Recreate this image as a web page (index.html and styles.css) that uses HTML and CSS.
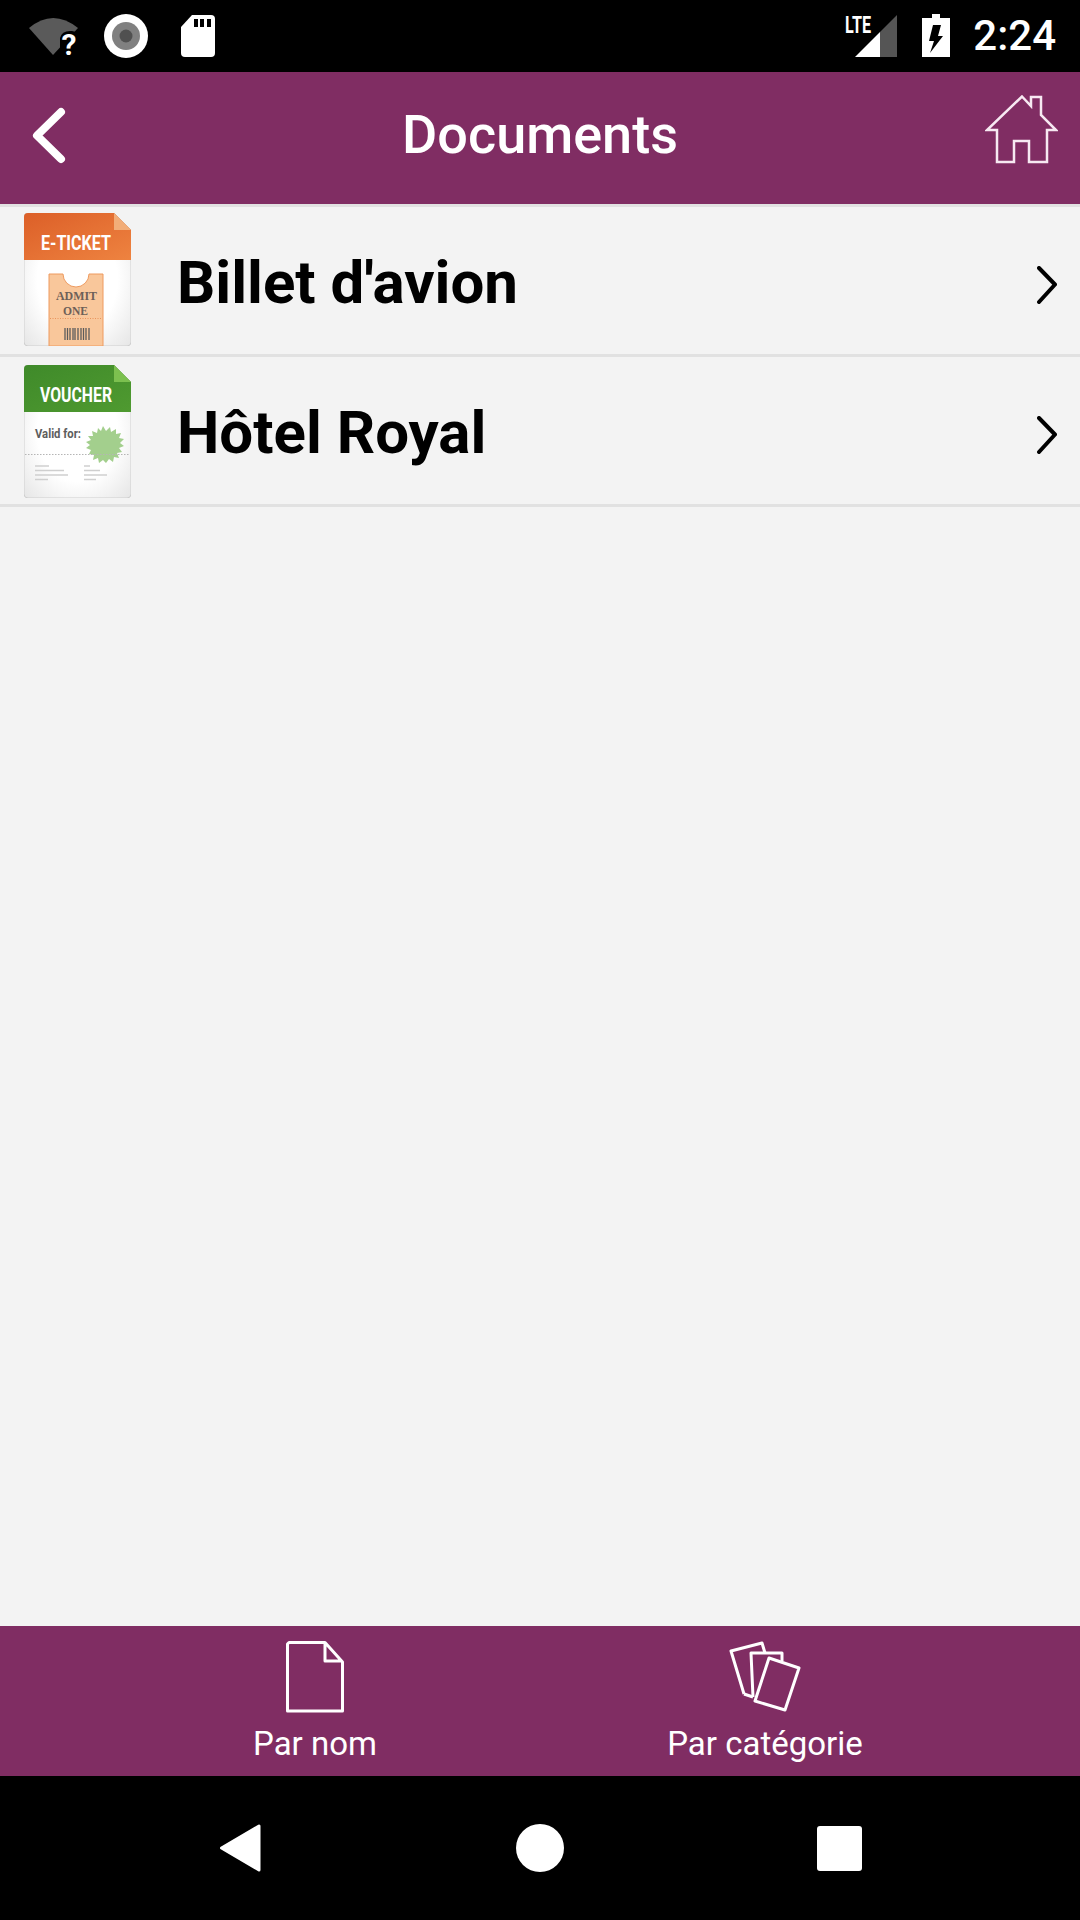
FILE: index.html
```html
<!DOCTYPE html>
<html lang="fr">
<head>
    <meta charset="UTF-8">
    <meta name="viewport" content="width=device-width, initial-scale=1.0">
    <title>Documents</title>
    <link rel="stylesheet" href="styles.css">
</head>
<body>

<!-- Android status bar -->
<div class="status-bar">
    <svg width="230" height="72" viewBox="0 0 230 72">
        <path d="M29 28 Q53 8 78 28 L53 55 Z" fill="#5a5a5a"/>
        <path d="M60 38 Q62 30 72 31 L80 33 V58 H60 Z" fill="#000"/>
        <text x="69" y="55" class="wifi-mark">?</text>
        <circle cx="126" cy="36" r="22" fill="#fff"/>
        <circle cx="126" cy="36" r="14" fill="#808080"/>
        <circle cx="126" cy="36" r="6.500" fill="#505050"/>
        <path d="M192 15 H211 Q215 15 215 19 V53 Q215 57 211 57 H185 Q181 57 181 53 V27 Z" fill="#fff"/>
        <rect x="194" y="19" width="4" height="8" fill="#000"/>
        <rect x="200" y="19" width="4" height="8" fill="#000"/>
        <rect x="207" y="19" width="4" height="8" fill="#000"/>
    </svg>
    <div class="status-right">
        <svg width="112" height="72" viewBox="0 0 112 72">
            <text x="0" y="33" class="lte-mark" textLength="26" lengthAdjust="spacingAndGlyphs">LTE</text>
            <path d="M10 57 L35 32 V57 Z" fill="#fff"/>
            <path d="M35 32 L52 15 V57 H35 Z" fill="#555"/>
            <path d="M87 14 H95 V18 H105 V57 H77 V18 H87 Z" fill="#fff"/>
            <path d="M88 25 H96 L93 36 H98 L85 53 L89 41 H84 Z" fill="#000"/>
        </svg>
        <span class="clock">2:24</span>
    </div>
</div>

<!-- Header -->
<header class="top-bar">
    <svg class="back-icon" width="34" height="57" viewBox="0 0 34 57">
        <path d="M29 5 L5 28.500 L29 52" fill="none" stroke="#fff" stroke-width="8" stroke-linecap="round" stroke-linejoin="round"/>
    </svg>
    <h1>Documents</h1>
    <svg class="home-icon" width="73" height="69" viewBox="0 0 73 69">
        <path d="M37 1.500 L46 11 V2 H56 V20 L71 35 H62 V67 H44 V46 H29 V67 H12 V35 H2 Z" fill="none" stroke="#f7e9f2" stroke-width="2.500"/>
    </svg>
</header>

<!-- Document list -->
<main class="doc-list">
    <a class="doc-row">
        <svg class="doc-thumb" width="107" height="133" viewBox="0 0 107 133">
            <defs>
                <radialGradient id="paper" cx="0.5" cy="0.5" r="0.75">
                    <stop offset="0.5" stop-color="#ffffff"/>
                    <stop offset="1" stop-color="#e2e2e2"/>
                </radialGradient>
                <linearGradient id="orange" x1="0" y1="0" x2="1" y2="1">
                    <stop offset="0" stop-color="#dc5f28"/>
                    <stop offset="1" stop-color="#ee8340"/>
                </linearGradient>
                <linearGradient id="green" x1="0" y1="0" x2="1" y2="1">
                    <stop offset="0" stop-color="#3f8a2a"/>
                    <stop offset="1" stop-color="#4f9a30"/>
                </linearGradient>
            </defs>
            <path d="M4 0 H90 L107 17 V129 Q107 133 103 133 H4 Q0 133 0 129 V4 Q0 0 4 0 Z" fill="url(#paper)" stroke="#cfcfcf"/>
            <path d="M4 0 H90 L107 17 V47 H0 V4 Q0 0 4 0 Z" fill="url(#orange)"/>
            <path d="M90 0 L107 17 H90 Z" fill="#f2ad78"/>
            <text x="17" y="37" class="thumb-title" textLength="70" lengthAdjust="spacingAndGlyphs">E-TICKET</text>
            <path d="M25 61 H39 A13 13 0 0 0 65 61 H79 V133 H25 Z" fill="#f9c79b" stroke="#ee9a5e"/>
            <text x="32" y="87" class="thumb-admit" textLength="41" lengthAdjust="spacingAndGlyphs">ADMIT</text>
            <text x="39" y="102" class="thumb-admit" textLength="25" lengthAdjust="spacingAndGlyphs">ONE</text>
            <line x1="26" y1="105.500" x2="78" y2="105.500" stroke="#e8935a" stroke-dasharray="1 1.500"/>
            <path d="M41 115 V127 M43.500 115 V127 M46 115 V127 M49 115 V127 M51 115 V127 M54 115 V127 M57 115 V127 M59.500 115 V127 M62 115 V127 M65 115 V127" stroke="#5c5c5c" stroke-width="1.300"/>
        </svg>
        <span class="doc-name">Billet d'avion</span>
        <svg class="row-arrow" width="20" height="38" viewBox="0 0 20 38">
            <path d="M2 2 L18 18.500 L2 36" fill="none" stroke="#000" stroke-width="4" stroke-linecap="round" stroke-linejoin="round"/>
        </svg>
    </a>
    <a class="doc-row">
        <svg class="doc-thumb" width="107" height="133" viewBox="0 0 107 133">
            <path d="M4 0 H90 L107 17 V129 Q107 133 103 133 H4 Q0 133 0 129 V4 Q0 0 4 0 Z" fill="url(#paper)" stroke="#cfcfcf"/>
            <path d="M4 0 H90 L107 17 V47 H0 V4 Q0 0 4 0 Z" fill="url(#green)"/>
            <path d="M90 0 L107 17 H90 Z" fill="#7cc04f"/>
            <text x="16" y="37" class="thumb-title" textLength="72" lengthAdjust="spacingAndGlyphs">VOUCHER</text>
            <text x="11" y="73" class="thumb-valid" textLength="46" lengthAdjust="spacingAndGlyphs">Valid for:</text>
            <path transform="translate(-2 0)" d="M81 61 L84 66 L88 62 L89 67 L94 64 L94 69 L99 68 L97 73 L102 74 L98 78 L102 81 L97 83 L100 87 L95 88 L97 93 L92 92 L91 97 L87 94 L84 98 L81 95 L77 98 L76 93 L71 95 L72 90 L67 89 L69 85 L64 83 L68 80 L64 77 L69 75 L66 71 L71 71 L70 66 L75 68 L76 63 L79 66 Z" fill="#a3cf8d"/>
            <line x1="1" y1="89.500" x2="106" y2="89.500" stroke="#b5b5b5" stroke-dasharray="1.500 1.500"/>
            <path d="M11 101 H25 M11 105.500 H40 M11 110 H44 M11 114.500 H24 M60 101 H66 M60 105.500 H76 M60 110 H83 M60 114.500 H72" stroke="#cfcfcf" stroke-width="1.300"/>
        </svg>
        <span class="doc-name">Hôtel Royal</span>
        <svg class="row-arrow" width="20" height="38" viewBox="0 0 20 38">
            <path d="M2 2 L18 18.500 L2 36" fill="none" stroke="#000" stroke-width="4" stroke-linecap="round" stroke-linejoin="round"/>
        </svg>
    </a>
</main>

<!-- Bottom tabs -->
<nav class="tab-bar">
    <a class="tab">
        <svg width="58" height="72" viewBox="0 0 58 72">
            <path d="M3 1.500 H39 L56.500 21 V70 H1.500 V3 Z M39 1.500 V20 H56.500" fill="none" stroke="#fff" stroke-width="3" stroke-linejoin="round"/>
        </svg>
        <span>Par nom</span>
    </a>
    <a class="tab">
        <svg width="72" height="72" viewBox="729 1641 72 72">
            <path d="M744 1694 L731 1651 L762 1643 L765 1653" fill="none" stroke="#fff" stroke-width="3" stroke-linejoin="round"/>
            <path d="M744 1694 L753 1697" fill="none" stroke="#fff" stroke-width="3"/>
            <path d="M753 1697 L751 1653 H782 V1661" fill="none" stroke="#fff" stroke-width="3" stroke-linejoin="round"/>
            <path d="M769 1658 L799 1668 L785 1710 L755 1701 Z" fill="#802d63" stroke="#fff" stroke-width="3" stroke-linejoin="round"/>
        </svg>
        <span>Par catégorie</span>
    </a>
</nav>

<!-- Android navigation bar -->
<div class="nav-bar">
    <svg width="42" height="48" viewBox="0 0 42 48">
        <path d="M2.500 24 L40 2 V46 Z" fill="#fff" stroke="#fff" stroke-width="3" stroke-linejoin="round"/>
    </svg>
    <span class="nav-home"></span>
    <span class="nav-recent"></span>
</div>

</body>
</html>
```

FILE: styles.css
```css
* { box-sizing: border-box; }
body { margin: 0; height: 1920px; display: flex; flex-direction: column; background: #f3f3f3; font-family: Roboto, sans-serif; }
svg { display: block; }

.status-bar { height: 72px; background: #000; display: flex; justify-content: space-between; }
.status-right { display: flex; padding-right: 24px; }
.status-right svg { margin-right: 16px; overflow: visible; }
.clock { color: #fff; font-size: 42px; line-height: 72px; font-weight: 500; }
.wifi-mark { fill: #fff; font-family: Roboto, sans-serif; font-weight: 700; font-size: 30px; text-anchor: middle; }
.lte-mark { fill: #fff; font-family: Roboto, sans-serif; font-weight: 700; font-size: 24px; }

.top-bar { height: 132px; background: #802d63; display: grid; grid-template-columns: 1fr auto 1fr; align-items: center; padding: 0 22px; }
.top-bar h1 { margin: -7px 0 0; color: #fff; font-size: 54px; font-weight: 500; }
.back-icon { margin: -5px 0 0 10px; }
.home-icon { margin-top: -17px; justify-self: end; }

.doc-list { flex: 1; border-top: 3px solid #e1e1e1; }
.doc-row { height: 150px; display: flex; align-items: center; padding: 0 24px; border-bottom: 3px solid #e1e1e1; }
.doc-thumb { margin-right: 46px; }
.doc-row:first-child .doc-thumb { margin-top: -2px; }
.doc-row:last-child .doc-thumb { margin-top: 2px; }
.doc-name { flex: 1; margin-top: 4px; font-size: 60px; font-weight: 700; color: #000; }
.row-arrow { margin-top: 8px; margin-right: -1px; }

.thumb-title { fill: #fff; font-family: Roboto, sans-serif; font-weight: 700; font-size: 20px; }
.thumb-admit { fill: #6d6058; font-family: "Liberation Serif", serif; font-weight: 700; font-size: 13px; }
.thumb-valid { fill: #5d5d5d; font-family: Roboto, sans-serif; font-weight: 700; font-size: 13px; }

.tab-bar { height: 150px; background: #802d63; display: grid; grid-template-columns: 1fr 1fr; padding: 15px 90px 0; }
.tab { display: flex; flex-direction: column; align-items: center; color: #fff; font-size: 33px; }
.tab span { margin-top: 11px; }

.nav-bar { height: 144px; background: #000; display: flex; align-items: center; padding: 0 218px 0 219px; justify-content: space-between; }
.nav-home { width: 48px; height: 48px; margin-left: 2px; border-radius: 50%; background: #fff; }
.nav-recent { width: 45px; height: 45px; border-radius: 3px; background: #fff; }
```
